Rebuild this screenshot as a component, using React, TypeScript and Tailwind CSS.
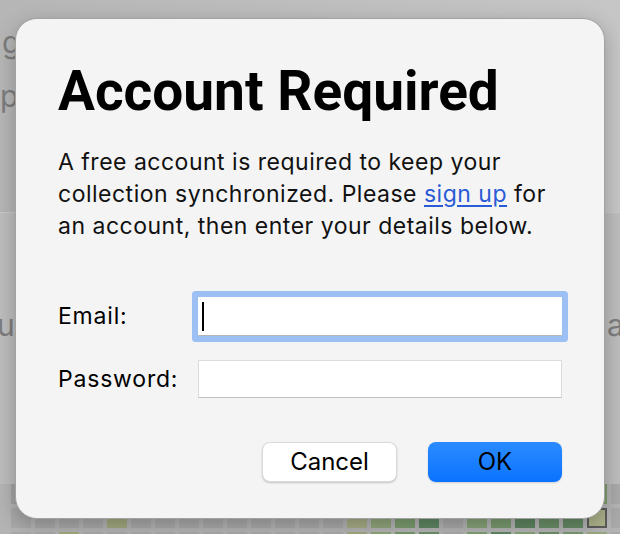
import React from "react";

const GRAY = "#a9a9a9";

// background heatmap rows (x = 11 + 24 * col)
const rowA: Record<number, string> = { 0: "#a4a4a4", 24: "#7c9c6e", 25: GRAY };
const rowB: Record<number, string> = {
  4: "#a3a97f",
  14: "#a7ac85",
  15: "#90a67b",
  16: "#7b9d6f",
  17: "#5f8763",
  18: GRAY,
  19: "#87a278",
  20: "#7a9a6f",
  21: "#5e8561",
  22: "#6a8e67",
  23: "#658a63",
  24: "#adb28a",
  25: GRAY,
};
const rowC: Record<number, string> = {
  2: "#a3a97f",
  14: "#a0a87f",
  15: "#8ea57a",
  16: "#769a6c",
  17: "#6a9068",
  19: "#7f9f73",
  20: "#5f8762",
  21: "#86a277",
  22: "#6b8e67",
  23: "#7a9a6f",
  24: "#98a97f",
  25: GRAY,
};

function HeatRow({ cells, marked }: { cells: Record<number, string>; marked?: number }) {
  return (
    <div className="flex gap-[4px]">
      {Array.from({ length: 26 }).map((_, i) => (
        <div
          key={i}
          className={"h-[20px] w-[20px] shrink-0 " + (i === marked ? "border-2 border-[#5c5c5c]" : "")}
          style={{ backgroundColor: cells[i] ?? GRAY }}
        />
      ))}
    </div>
  );
}

export default function App() {
  return (
    <div
      className="relative h-[534px] w-[620px] overflow-hidden bg-[#bdbdbd] text-black"
      style={{ fontFamily: "Inter, 'Noto Sans', sans-serif" }}
    >
      {/* backdrop: window behind the sheet */}
      <div className="h-[213px] border-b border-[#c9c9c9] bg-gradient-to-r from-[#b6b6b6] to-[#c6c6c6] pl-[2px] pt-[22px] text-[30px] leading-[40px] text-[#7d7d7d]">
        <div>gi</div>
        <div className="mt-[14px] -ml-[2px]">pa</div>
      </div>
      <div className="mt-[94px] flex justify-between text-[30px] leading-[36px] text-[#7d7d7d]">
        <span className="-ml-[3px]">uc</span>
        <span className="w-[13px] whitespace-nowrap">ar</span>
      </div>
      <div className="mt-[141px] flex flex-col gap-[4px] bg-[#b4b4b4] pl-[11px]">
        <HeatRow cells={rowA} />
        <HeatRow cells={rowB} marked={24} />
        <HeatRow cells={rowC} />
      </div>

      {/* sheet */}
      <div className="absolute left-[15px] top-[18px] flex h-[501px] w-[590px] flex-col rounded-[22px] border border-[#a2a2a2] bg-[#f4f4f4] px-[42px] pt-[45px] shadow-[0_6px_20px_rgba(0,0,0,0.25)]">
        <h1
          className="text-[55px] font-bold leading-[54px]"
          style={{ fontFamily: "Roboto, 'Liberation Sans', sans-serif" }}
        >
          Account Required
        </h1>

        <p className="mt-[28px] whitespace-nowrap text-[23px] leading-[32px] tracking-[0.5px] text-[#111]">
          A free account is required to keep your
          <br />
          collection synchronized. Please{" "}
          <a href="#" className="text-[#2a5bd6] underline underline-offset-[3px]">
            sign up
          </a>{" "}
          for
          <br />
          an account, then enter your details below.
        </p>

        <div className="mt-[55px] grid grid-cols-[140px_1fr] items-center gap-y-[24px] text-[23px] tracking-[0.8px]">
          <label htmlFor="email">Email:</label>
          <div className="relative">
            <input
              id="email"
              type="email"
              className="block h-[39px] w-full rounded-[1px] border-b border-[#b5b5b5] bg-white px-[4px] outline-none ring-[6px] ring-[#9cc0f3]"
            />
            <span className="absolute left-[4px] top-[5px] h-[29px] w-[2px] bg-black" />
          </div>

          <label htmlFor="password">Password:</label>
          <input
            id="password"
            type="password"
            className="block h-[38px] w-full border border-[#dcdcdc] border-b-[#c0c0c0] bg-white px-[4px] outline-none"
          />
        </div>

        <div className="mt-[44px] flex justify-end gap-[31px] text-[24px]">
          <button className="h-[40px] w-[135px] rounded-[8px] border border-[#dadada] bg-white shadow-[0_1px_2px_rgba(0,0,0,0.2)]">
            Cancel
          </button>
          <button className="h-[40px] w-[134px] rounded-[8px] bg-gradient-to-b from-[#2a8bff] to-[#0872ff] shadow-[0_1px_2px_rgba(0,0,0,0.15)]">
            OK
          </button>
        </div>
      </div>
    </div>
  );
}
